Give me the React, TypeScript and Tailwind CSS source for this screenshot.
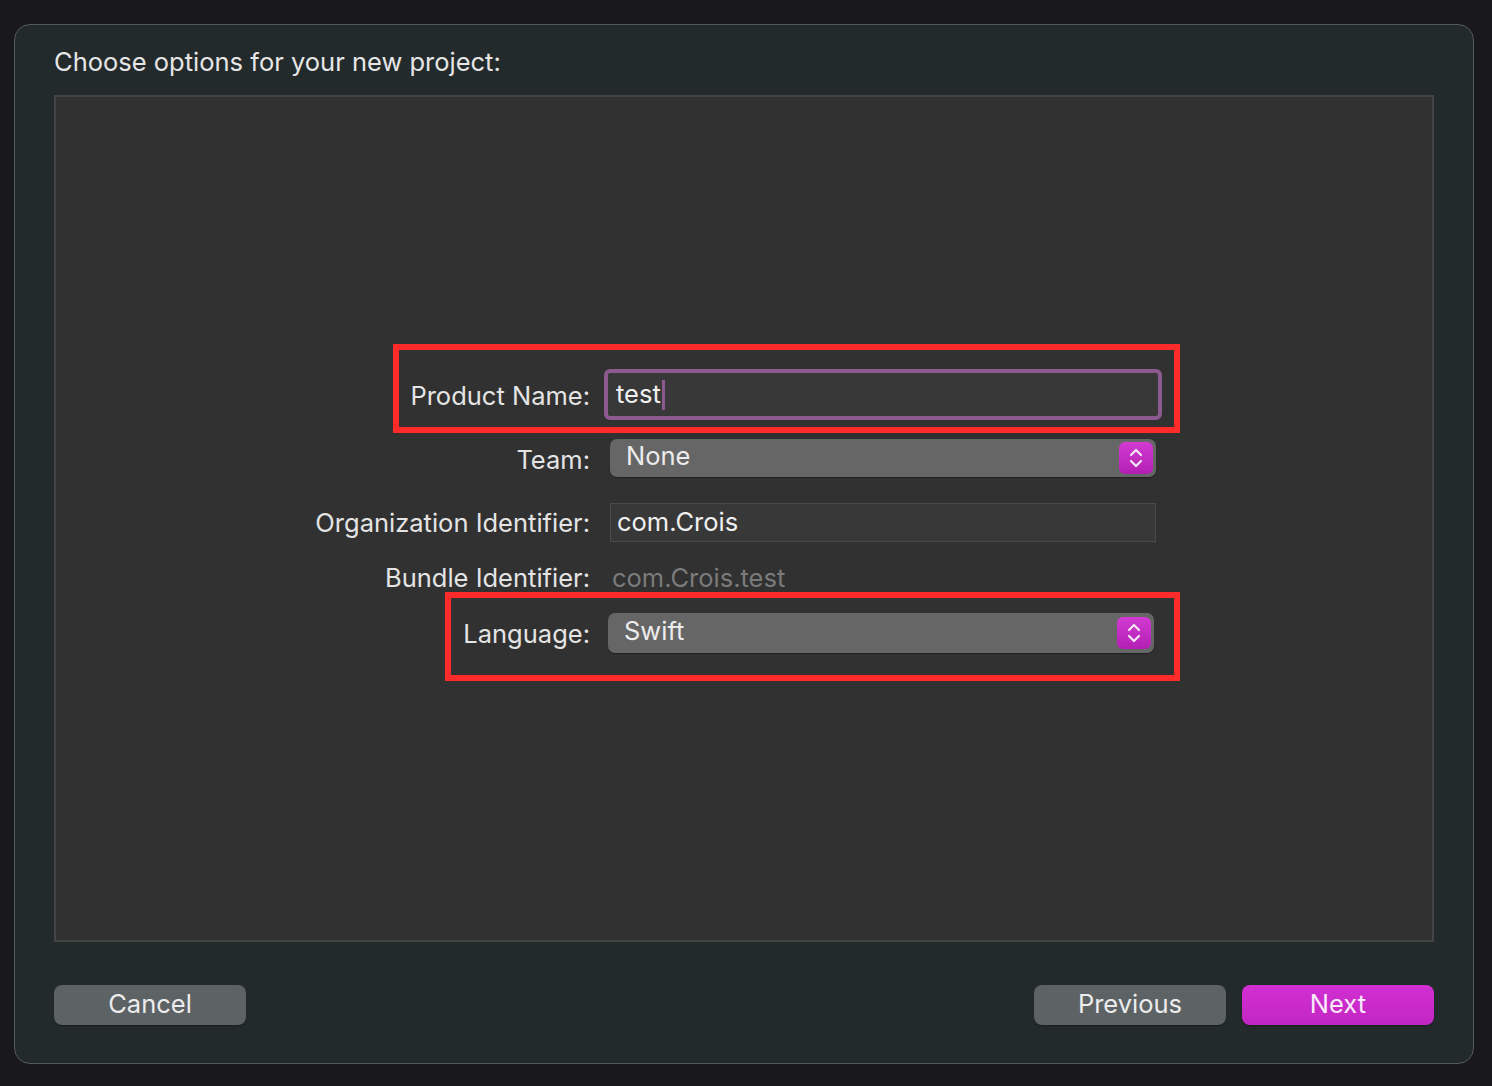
import React from 'react';

function Stepper() {
  return (
    <div className="flex h-[32px] w-[34px] items-center justify-center rounded-[6px] bg-gradient-to-b from-[#d23ad2] to-[#b31fb3]">
      <svg width="16" height="24" viewBox="0 0 16 24" fill="none" stroke="#f4e6f4" strokeWidth="2.2" strokeLinecap="round" strokeLinejoin="round">
        <path d="M3 9 L8 4 L13 9" />
        <path d="M3 15 L8 20 L13 15" />
      </svg>
    </div>
  );
}

function Popup({ value }: { value: string }) {
  return (
    <div className="flex h-full w-[546px] items-center justify-between rounded-[7px] bg-[#666666] pl-[16px] pr-[3px] shadow-[0_1px_1px_rgba(0,0,0,0.35)]">
      <span className="-mt-[3px] text-[#ececec]">{value}</span>
      <Stepper />
    </div>
  );
}

export default function App() {
  return (
    <div
      className="min-h-[1086px] w-[1492px] bg-[#19191b] pt-[24px] text-[25.5px] text-[#e4e4e4]"
      style={{ fontFamily: 'Inter, "Liberation Sans", sans-serif' }}
    >
      <div className="ml-[14px] flex h-[1040px] w-[1460px] flex-col rounded-[16px] border border-[#55595b] bg-[#232a2c] px-[39px]">
        <h1 className="mt-[22px] h-[48px] text-[25.5px] leading-[30px] text-[#e6e6e6]">Choose options for your new project:</h1>

        <div className="flex h-[847px] w-[1380px] flex-col border-2 border-[#444444] bg-[#313131] pt-[272px]">
          {/* Product Name */}
          <div className="relative flex h-[51px] w-[1100px] items-center">
            <div className="mt-[4px] w-[534px] shrink-0 text-right">Product Name:</div>
            <div className="ml-[14px] flex h-[51px] w-[558px] shrink-0 items-center rounded-[6px] border-4 border-[#8b5a8f] bg-[#383838] pl-[8px]">
              <span className="text-[25.5px] text-[#f0f0f0]">test</span>
              <span className="ml-[1px] h-[30px] w-[3px] bg-[#8b5a8f]" />
            </div>
            <div className="pointer-events-none absolute top-[-25px] bottom-[-13px] left-[337px] right-[-24px] border-[6px] border-[#ff2a2a]" />
          </div>

          {/* Team */}
          <div className="mt-[19px] flex h-[38px] w-[1100px] items-center">
            <div className="mt-[4px] w-[534px] shrink-0 text-right">Team:</div>
            <div className="ml-[20px] h-full shrink-0">
              <Popup value="None" />
            </div>
          </div>

          {/* Organization Identifier */}
          <div className="mt-[26px] flex h-[39px] w-[1100px] items-center">
            <div className="mt-[2px] w-[534px] shrink-0 text-right">Organization Identifier:</div>
            <div className="ml-[20px] flex h-full w-[546px] shrink-0 items-center border border-[#4a4a4a] bg-[#383838] pl-[6px] text-[#f0f0f0]">
              com.Crois
            </div>
          </div>

          {/* Bundle Identifier */}
          <div className="mt-[21px] flex h-[30px] w-[1100px] items-center">
            <div className="w-[534px] shrink-0 text-right">Bundle Identifier:</div>
            <div className="ml-[22px] text-[#7b7b7b]">com.Crois.test</div>
          </div>

          {/* Language */}
          <div className="relative mt-[20px] flex h-[40px] w-[1100px] items-center">
            <div className="mt-[2px] w-[534px] shrink-0 text-right">Language:</div>
            <div className="ml-[18px] h-full shrink-0">
              <Popup value="Swift" />
            </div>
            <div className="pointer-events-none absolute top-[-21px] bottom-[-28px] left-[389px] right-[-24px] border-[6px] border-[#ff2a2a]" />
          </div>
        </div>

        <div className="mt-[43px] flex items-center justify-between">
          <button className="h-[40px] w-[192px] rounded-[8px] bg-[#5d6265] pb-[2px] text-[25.5px] text-[#ececec] shadow-[0_1px_1px_rgba(0,0,0,0.3)]">
            Cancel
          </button>
          <div className="flex gap-[16px]">
            <button className="h-[40px] w-[192px] rounded-[8px] bg-[#5d6265] pb-[2px] text-[25.5px] text-[#ececec] shadow-[0_1px_1px_rgba(0,0,0,0.3)]">
              Previous
            </button>
            <button className="h-[40px] w-[192px] rounded-[8px] bg-gradient-to-b from-[#d22fd2] to-[#c227c2] pb-[2px] text-[25.5px] text-[#fbeafb] shadow-[0_1px_1px_rgba(0,0,0,0.3)]">
              Next
            </button>
          </div>
        </div>
      </div>
    </div>
  );
}
